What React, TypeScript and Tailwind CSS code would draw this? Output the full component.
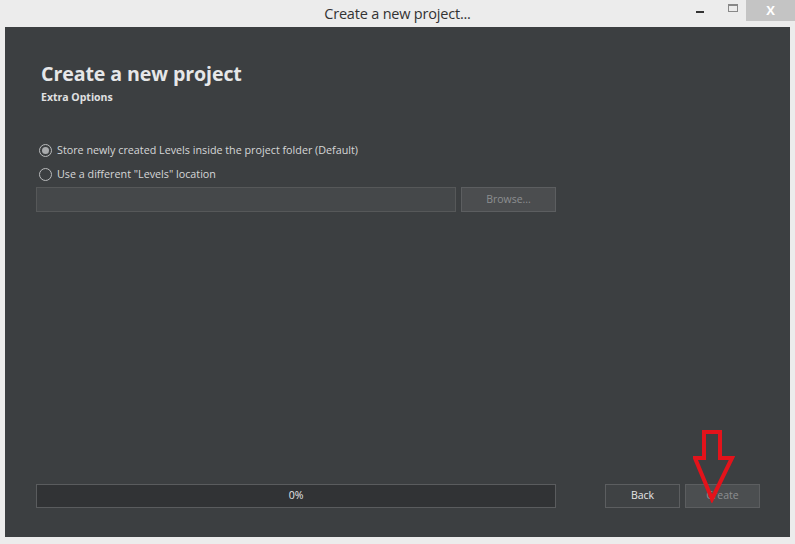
import { useState } from 'react'

function Radio({ checked, label, onClick }: { checked: boolean; label: string; onClick: () => void }) {
  return (
    <button onClick={onClick} className="flex items-center gap-[5px] text-left">
      <span className="w-[13px] h-[13px] rounded-full border border-[#b9bbbc] flex items-center justify-center">
        {checked && <span className="w-[7px] h-[7px] rounded-full bg-[#a9abad]" />}
      </span>
      <span className="text-[10.75px] text-[#d6d7d8] leading-none">{label}</span>
    </button>
  )
}

function RedArrow() {
  return (
    <svg className="absolute left-[693px] top-[429px] pointer-events-none" width="42" height="74" viewBox="0 0 42 74">
      <path
        d="M11 3 L27 3 L27 29 L39 29 L19 70 L2 29 L11 29 Z"
        fill="none"
        stroke="#e3131b"
        strokeWidth="4"
        strokeLinejoin="miter"
      />
    </svg>
  )
}

export default function App() {
  const [choice, setChoice] = useState(0)

  return (
    <div className="relative w-[795px] h-[544px] bg-[#ececec] flex flex-col font-['Open_Sans',sans-serif] overflow-hidden">
      <div className="relative h-[27px] shrink-0 flex items-center justify-center">
        <span className="text-[14.5px] text-[#333] tracking-[-0.2px]">Create a new project...</span>
        <div className="absolute right-0 top-0 flex items-start">
          <div className="w-[40px] h-[20px] flex items-center justify-center">
            <span className="block w-[8px] h-[2px] bg-[#333] mt-[4px]" />
          </div>
          <div className="w-[26px] h-[20px] flex items-center justify-center">
            <span className="block w-[10px] h-[8px] border border-[#888] border-t-2 mb-[5px]" />
          </div>
          <div className="w-[49px] h-[21px] bg-[#c4c4c4] flex items-center justify-center text-white text-[13px] font-bold">
            X
          </div>
        </div>
      </div>

      <div className="flex-1 mx-[5px] mb-[7px] bg-[#3c3f41] flex flex-col pl-[31px] pr-[30px] pt-[34px] pb-[29px]">
        <h1 className="ml-[5px] text-[19.6px] font-bold text-[#e6e7e8] leading-[26px] tracking-[-0.1px]">Create a new project</h1>
        <p className="ml-[5px] mt-[3px] text-[10.5px] font-bold text-[#e0e1e2] leading-[14px]">Extra Options</p>

        <div className="mt-[40px] ml-[3px] flex flex-col gap-[11px]">
          <Radio checked={choice === 0} onClick={() => setChoice(0)} label="Store newly created Levels inside the project folder (Default)" />
          <Radio checked={choice === 1} onClick={() => setChoice(1)} label={'Use a different "Levels" location'} />
        </div>

        <div className="mt-[6px] flex gap-[5px]">
          <div className="w-[420px] h-[25px] shrink-0 bg-[#45484a] border border-[#565859]" />
          <div className="w-[95px] h-[25px] shrink-0 bg-[#4b4d4f] border border-[#5c5e60] flex items-center justify-center text-[10.5px] text-[#8d8f91]">
            Browse...
          </div>
        </div>

        <div className="flex-1" />

        <div className="flex items-center">
          <div className="w-[520px] h-[24px] shrink-0 bg-[#313335] border border-[#5a5c5e] flex items-center justify-center text-[10.5px] text-[#e4e5e6]">
            0%
          </div>
          <div className="ml-[49px] w-[75px] h-[24px] shrink-0 bg-[#3f4244] border border-[#5c5e60] flex items-center justify-center text-[10.5px] text-[#e4e5e6]">
            Back
          </div>
          <div className="ml-[5px] w-[75px] h-[24px] shrink-0 bg-[#4b4e50] border border-[#5c5e60] flex items-center justify-center text-[10.5px] text-[#8d8f91]">
            Create
          </div>
        </div>
      </div>

      <RedArrow />
    </div>
  )
}
